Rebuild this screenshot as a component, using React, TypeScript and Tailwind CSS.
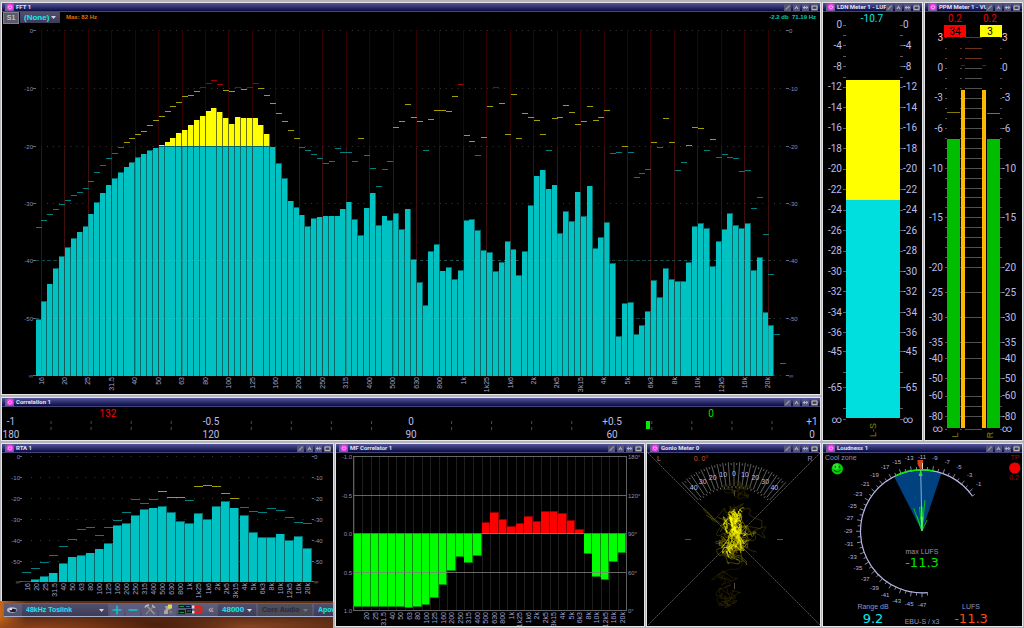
import type { ReactNode } from "react";

const FONT = '"Liberation Sans", Arial, sans-serif';
const METER = 'Roboto, "Liberation Sans", sans-serif';
const READOUT = '"DejaVu Sans", Verdana, sans-serif';

const BANDS = [
  "16", "20", "25", "31.5", "40", "50", "63", "80", "100", "125", "160", "200", "250", "315", "400", "500",
  "630", "800", "1k", "1k25", "1k6", "2k", "2k5", "3k15", "4k", "5k", "6k3", "8k", "10k", "12k5", "16k", "20k",
];

/* ---------- window frame ---------- */

function Glyph({ kind }: { kind: number }) {
  return (
    <svg viewBox="0 0 7 7" className="block h-[7px] w-[7px]" aria-hidden="true">
      {kind === 0 && <path d="M1.2 6 L2 4.6 L5.2 1.3 L6 2 L2.8 5.2Z" fill="#aaa896" />}
      {kind === 1 && <path d="M3.5 1.6 L5.6 5 H4.4 L3.5 3.4 L2.6 5 H1.4Z" fill="#b4b3c0" />}
      {kind === 2 && <path d="M0.6 3.5 L2.8 1.8 V5.2Z M6.4 3.5 L4.2 1.8 V5.2Z M2.5 3 H4.5 V4 H2.5Z" fill="#b4bce0" />}
      {kind === 3 && <path d="M1 2 H6 V5.4 H1Z" fill="#40405e" stroke="#c8c6b0" strokeWidth="1" />}
    </svg>
  );
}

const ACTIONS = ["Edit", "Collapse", "Resize", "Maximise"];

function Panel({ title, children }: { title: string; children: ReactNode }) {
  return (
    <section className="min-w-0 bg-black ring-1 ring-[#e4e4e6]">
      <header className="flex h-[9px] items-center gap-[2px] border-b border-[#45457a] bg-linear-to-b from-[#55559c] to-[#0c0c44] pr-[2px] pl-[3px]">
        <button
          type="button"
          aria-label={`${title} power`}
          className="flex h-2 w-[9px] shrink-0 items-center justify-center bg-[#62628a]"
        >
          <svg viewBox="0 0 8 8" className="block h-2 w-2" aria-hidden="true">
            <circle cx="4" cy="4" r="3.4" fill="#f838f0" />
            <path d="M2.7 3 A1.7 1.7 0 1 0 5.3 3 M4 2 V4" fill="none" stroke="#ffd0ff" strokeWidth="0.7" />
          </svg>
        </button>
        <h2 className="min-w-0 flex-1 font-[Roboto,sans-serif] text-[6px] leading-[8px] font-bold whitespace-nowrap text-[#e4e4f6]">
          {title}
        </h2>
        <div className="flex shrink-0 gap-[2px]">
          {ACTIONS.map((name, i) => (
            <button key={name} type="button" aria-label={name} className="h-[7px] w-[7px] bg-[#55557c]">
              <Glyph kind={i} />
            </button>
          ))}
        </div>
      </header>
      {children}
    </section>
  );
}

function Label(p: {
  x: number;
  y: number;
  size?: number;
  fill?: string;
  anchor?: "start" | "middle" | "end";
  font?: string;
  children: ReactNode;
}) {
  return (
    <text
      x={p.x}
      y={p.y}
      fontSize={p.size ?? 6}
      fill={p.fill ?? "#8e8eba"}
      textAnchor={p.anchor ?? "middle"}
      dominantBaseline="central"
      fontFamily={p.font ?? FONT}
    >
      {p.children}
    </text>
  );
}

function BandLabels({ x0, step, y, size, from = 0 }: { x0: number; step: number; y: number; size: number; from?: number }) {
  return (
    <g fontFamily={FONT} fontSize={size} fill="#a2a2d0" textAnchor="end">
      {BANDS.slice(from).map((b, i) => (
        <text key={b} transform={`translate(${x0 + (i + from) * step} ${y}) rotate(-90)`} dominantBaseline="central">
          {b}
        </text>
      ))}
    </g>
  );
}

/* ---------- FFT ---------- */

const FFT_TOPS = [
  319, 301, 283.7, 268, 256, 247, 238, 231.5, 226, 213.5, 202, 192.7, 184.7, 178, 172, 166.7, 162, 157, 153.7, 150,
  147.7, 145, 142, 138, 133, 130, 125, 120.3, 116, 111, 108, 112, 118, 124, 117, 118, 118, 118, 125, 134, 146.7, 163,
  178, 200.7, 207, 214.5, 226.3, 218, 216.7, 215.5, 215.5, 215.5, 208.7, 201.7, 219, 235, 207.5, 192.7, 225.3, 215.5,
  220.3, 213.3, 229.3, 208.7, 259.3, 282, 305.3, 251, 244, 270.7, 267.3, 279, 270, 220.3, 219.3, 230.3, 250.3, 252.3,
  271, 262, 241, 249.3, 275, 251, 205, 175.7, 169.7, 188.7, 184.7, 233, 211.3, 221.3, 191.7, 216.3, 185.7, 248, 237.3,
  222.3, 263, 336.3, 303, 302, 334, 325, 311, 280, 297, 268, 279, 281, 281, 262, 226.3, 223.3, 228.3, 266, 241.3,
  229.3, 213.3, 225, 228.3, 223.3, 270, 257, 312, 325,
];

const FFT_PEAKS = [
  227.3, 220.3, 214.3, 209, 204.3, 200, 195.3, 192, 188.7, 181.7, 172.3, 165.3, 158.3, 153.3, 147.3, 142.3, 138.3,
  134.3, 131.3, 125.3, 120.3, 116.3, 111.3, 106.3, 102.3, 96.3, 95.3, 91.7, 87.3, 83.3, 80.3, 84.7, 90.3, 91.7, 87.3,
  89.3, 87.3, 83.3, 88.3, 95.3, 103.3, 113.3, 121.3, 130.3, 138.3, 147.3, 150.3, 154.3, 158.3, 163.3, 161.3, 148.3,
  152.3, 152.3, 161.3, 138.3, 155.3, 168, 186.3, 169.3, 161.3, 127.3, 121.3, 104.3, 117.3, 121.3, 150.3, 119.3, 110.3,
  110.3, 111.3, 96.3, 84.7, 135.3, 141.3, 155.3, 137.3, 106.3, 87.3, 103.3, 134.3, 94.3, 138.3, 113.3, 117.3, 120.3,
  134.3, 150.3, 118.3, 117.3, 105.3, 112.3, 124.3, 121.3, 106.3, 120.3, 117.3, 110.3, 153.3, 152.3, 146.3, 152.3,
  177.3, 173.7, 169.3, 142.3, 147.3, 118.3, 142.3, 170.3, 162.3, 145.3, 127.3, 128.3, 150.3, 139.3, 157.3, 154.3,
  157.3, 158.3, 171.3, 170.3, 208, 197.7, 234.3, 274.3, 334.3, 363,
];

const FFT_ROWS: [string, number][] = [
  ["0", 30], ["-10", 88], ["-20", 146], ["-30", 203], ["-40", 260], ["-50", 318], ["∞", 375],
];

function peakColor(y: number, red: number, yellow: number) {
  if (y < red) return "#a40000";
  return y < yellow ? "#a69e00" : "#008080";
}

function FftChart() {
  const x0 = 35.6;
  const step = 5.863;
  return (
    <svg viewBox="2 24 818 370" className="block h-auto w-full" role="img" aria-label="FFT spectrum">
      {FFT_ROWS.map(([name, y]) => (
        <g key={name}>
          <line x1="47" x2="787" y1={y + 0.5} y2={y + 0.5} stroke="#3a3a3a" strokeDasharray={`1 ${step - 1}`} />
          <rect x="33" y={y} width="3" height="1" fill="#66668c" />
          <rect x="786" y={y} width="3" height="1" fill="#66668c" />
          <Label x={33} y={y + 0.5} anchor="end">{name}</Label>
          <Label x={789} y={y + 0.5} anchor="start">{name}</Label>
        </g>
      ))}
      {BANDS.map((b, i) => (
        <rect key={b} x={Math.round(40.8 + i * 23.45)} y="30" width="1" height="345" fill="#330000" />
      ))}
      {FFT_TOPS.map((t, i) => {
        const x = Math.round(x0 + i * step);
        const next = Math.round(x0 + (i + 1) * step);
        const tealTop = Math.max(t, 146);
        return (
          <g key={i} shapeRendering="crispEdges">
            {t < 146 && <rect x={x} y={t} width={next - x} height={146 - t} fill="#6e6e00" />}
            {t < 146 && <rect x={x} y={t} width={5} height={146 - t} fill="#ffff00" />}
            <rect x={x} y={tealTop} width={next - x} height={375.5 - tealTop} fill="#006868" />
            <rect x={x} y={tealTop + 0.6} width={5} height={375 - tealTop} fill="#00c2c2" />
          </g>
        );
      })}
      {[260, 318].map((y) => (
        <line key={y} x1="36" x2="774" y1={y + 0.5} y2={y + 0.5} stroke="#38cccc" strokeOpacity="0.35" strokeDasharray="3 3" />
      ))}
      {BANDS.map((b, i) => (
        <rect key={b} x={Math.round(40.8 + i * 23.45)} y="146" width="1" height="229" fill="#5c3030" fillOpacity="0.3" />
      ))}
      {FFT_PEAKS.map((y, i) => (
        <rect key={i} x={Math.round(x0 + i * step)} y={Math.round(y - 0.3)} width="6" height="1" fill={peakColor(y, 88, 147)} />
      ))}
      <BandLabels x0={41} step={23.45} y={377} size={7} />
    </svg>
  );
}

/* ---------- correlation ---------- */

function CorrelationChart() {
  const scale: [number, string, string][] = [
    [11, "-1", "180"], [211, "-0.5", "120"], [411, "0", "90"], [612, "+0.5", "60"], [812, "+1", "0"],
  ];
  return (
    <svg viewBox="2 407 818 33" className="block h-auto w-full" role="img" aria-label="Correlation">
      {Array.from({ length: 21 }, (_, i) => i)
        .filter((i) => i % 5 !== 0)
        .map((i) => (
          <path key={i} d={`M${11 + i * 40.05} 421 v3 m0 3 v3`} stroke="#4c4c4c" />
        ))}
      {scale.map(([x, top, bottom]) => (
        <g key={x}>
          <Label x={x} y={421} size={10} fill="#bcbcec" font={METER}>{top}</Label>
          <Label x={x} y={434} size={10} fill="#bcbcec" font={METER}>{bottom}</Label>
        </g>
      ))}
      <Label x={108} y={413.5} size={10} fill="#ff0000" font={METER}>132</Label>
      <Label x={711} y={413.5} size={10} fill="#00e000" font={METER}>0</Label>
      <rect x="646" y="421" width="4" height="8" fill="#00f000" />
    </svg>
  );
}

/* ---------- LDN meter ---------- */

const LDN_ROWS: [string, number][] = [
  ["0", 24.5], ["-4", 45.3], ["-8", 66], ["-12", 86.7], ["-14", 107.3], ["-16", 127.7], ["-18", 148], ["-20", 168.5],
  ["-22", 189], ["-24", 209.5], ["-26", 230.3], ["-28", 250.7], ["-30", 271.3], ["-32", 291.3], ["-34", 312],
  ["-36", 332.3], ["-45", 351], ["-65", 387.3], ["∞", 419],
];

function LdnChart() {
  return (
    <svg viewBox="823 12 99 428" className="block h-auto w-full" role="img" aria-label="LDN meter">
      <Label x={872} y={18} size={10} fill="#00e8e8" font={METER}>-10.7</Label>
      {[...LDN_ROWS.map((r) => r[1]), 34.8, 56, 76.6, 371.7, 408.3].map((y) => (
        <path key={y} d={`M843 ${Math.round(y) + 0.5} h3 M900 ${Math.round(y) + 0.5} h3`} stroke="#5c5c5c" />
      ))}
      <rect x="846" y="80" width="54" height="120" fill="#ffff00" />
      <rect x="846" y="200" width="54" height="218" fill="#00dede" />
      {LDN_ROWS.map(([name, y]) => (
        <g key={name}>
          <Label x={842} y={y} size={10} fill="#bcbcec" anchor="end" font={METER}>{name}</Label>
          <Label x={903} y={y} size={10} fill="#bcbcec" anchor="start" font={METER}>{name}</Label>
        </g>
      ))}
      <text
        transform="translate(873 430) rotate(-90)"
        fontSize="9"
        fontFamily={FONT}
        fill="#8a8600"
        textAnchor="middle"
        dominantBaseline="central"
      >
        L-S
      </text>
    </svg>
  );
}

/* ---------- PPM meter ---------- */

const PPM_ROWS: [string, number][] = [
  ["3", 37.3], ["0", 67.7], ["-3", 97.7], ["-6", 128], ["-10", 168], ["-15", 217], ["-20", 267.3], ["-25", 292.3],
  ["-30", 317.3], ["-35", 342.3], ["-40", 358.3], ["-50", 378], ["-60", 395.7], ["-80", 416], ["∞", 428.5],
];
const PPM_MINOR = [
  48, 58, 78, 88, 108, 118, 138, 148, 158, 178, 188, 197, 207, 227, 237, 247, 257, 406,
];

function PpmChart() {
  return (
    <svg viewBox="925 12 97 428" className="block h-auto w-full" role="img" aria-label="PPM meter">
      <Label x={955} y={18.5} size={10} fill="#e80000" font={METER}>0.2</Label>
      <Label x={990} y={18.5} size={10} fill="#e80000" font={METER}>0.2</Label>
      {[...PPM_ROWS.map((r) => Math.round(r[1])), ...PPM_MINOR].map((y) => {
        const color = y < 60 ? "#6e3218" : "#505050";
        return (
          <g key={y} fill={color}>
            <rect x="965" y={y} width="17" height="1" />
            <rect x="945" y={y} width="2" height="1" />
            <rect x="960" y={y} width="2" height="1" />
            <rect x="1000" y={y} width="2" height="1" />
          </g>
        );
      })}
      <rect x="944" y="25" width="22" height="12" fill="#ff0000" />
      <rect x="980" y="25" width="22" height="12" fill="#ffff00" />
      <Label x={955} y={31} size={10} fill="#000000" font={METER}>34</Label>
      <Label x={990} y={31} size={10} fill="#000000" font={METER}>3</Label>
      <rect x="947" y="139" width="13" height="289" fill="#00bd00" />
      <rect x="987" y="139" width="13" height="289" fill="#00bd00" />
      <rect x="961" y="90" width="4" height="338" fill="#ffb800" />
      <rect x="982" y="90" width="4" height="338" fill="#ffb800" />
      <rect x="947" y="112" width="13" height="1" fill="#827a00" />
      <rect x="987" y="113" width="13" height="1" fill="#827a00" />
      <rect x="961" y="65" width="4" height="1" fill="#a00000" />
      <rect x="982" y="65" width="4" height="1" fill="#a00000" />
      {PPM_ROWS.map(([name, y], i) => (
        <g key={name}>
          <Label x={943} y={y} size={10} fill={i === 0 ? "#ffc4c4" : "#bcbcec"} anchor="end" font={METER}>{name}</Label>
          <Label x={1002} y={y} size={10} fill={i === 0 ? "#ffc4c4" : "#bcbcec"} anchor="start" font={METER}>{name}</Label>
        </g>
      ))}
      <g fontSize="9" fontFamily={FONT} fill="#8a8600" textAnchor="middle" dominantBaseline="central">
        <text transform="translate(955 435) rotate(-90)">L</text>
        <text transform="translate(990 435) rotate(-90)">R</text>
      </g>
    </svg>
  );
}

/* ---------- RTA ---------- */

const RTA_TOPS = [
  581, 579, 576, 572.7, 563.3, 556.7, 555, 552.7, 548.7, 543, 525.3, 523.3, 515, 509, 507.7, 506, 512, 521, 523.3,
  513.3, 519, 506.3, 501.3, 507.7, 515, 532.3, 537, 537, 533.7, 540, 536.3, 548,
];
const RTA_PEAKS = [
  572.7, 568.3, 562.3, 555.3, 546.3, 539.3, 529.3, 527.3, 535.3, 527, 520.3, 512.3, 499.3, 503.3, 499.3, 491.7, 497.3,
  497.3, 500.7, 486.3, 485.3, 486, 493.3, 498.3, 507.7, 511.3, 512.3, 508.7, 510.7, 517, 522.3, 523.3,
];
const RTA_ROWS: [string, number][] = [
  ["0", 456], ["-10", 477], ["-20", 498], ["-30", 519], ["-40", 540], ["-50", 561], ["∞", 581],
];

function RtaChart() {
  return (
    <svg viewBox="2 453 331 148" className="block h-auto w-full" role="img" aria-label="Real time analyser">
      {RTA_ROWS.map(([name, y]) => (
        <g key={name}>
          <line x1="31" x2="312" y1={y + 0.5} y2={y + 0.5} stroke="#3a3a3a" strokeDasharray="1 8.05" />
          <rect x="20" y={y} width="2" height="1" fill="#66668c" />
          <rect x="312" y={y} width="2" height="1" fill="#66668c" />
          <Label x={20} y={y + 0.5} anchor="end">{name}</Label>
          <Label x={314} y={y + 0.5} anchor="start">{name}</Label>
        </g>
      ))}
      {RTA_TOPS.map((t, i) => {
        const x = Math.round(22.3 + i * 9.05);
        return (
          <g key={i} shapeRendering="crispEdges">
            <rect x={x} y={t} width={9} height={581.5 - t} fill="#006868" />
            <rect x={x} y={t + 0.6} width={8} height={581 - t} fill="#00c2c2" />
          </g>
        );
      })}
      {RTA_PEAKS.map((y, i) => (
        <rect key={i} x={Math.round(22.3 + i * 9.05)} y={Math.round(y - 0.3)} width="9" height="1" fill={peakColor(y, 470, 498.5)} />
      ))}
      <BandLabels x0={27} step={9.05} y={583} size={7} />
    </svg>
  );
}

/* ---------- MF correlator ---------- */

const MF = [
  607, 607, 607, 607, 607, 607, 607.7, 607, 604.3, 597.7, 584.3, 571, 556.7, 562.3, 555.3, 522.3, 512, 519, 526, 523.3,
  516.3, 521.3, 511.3, 510.7, 513.3, 520, 529, 553.3, 576.7, 579.3, 561.7, 553,
];

function MfChart() {
  const rows: [string, string, number][] = [
    ["-1.0", "180°", 456], ["-0.5", "120°", 495], ["0.0", "90°", 533], ["0.5", "60°", 572], ["1.0", "0°", 610],
  ];
  return (
    <svg viewBox="336 453 308 173" className="block h-auto w-full" role="img" aria-label="MF correlator">
      {MF.map((_, i) => (
        <rect key={i} x={Math.round(353.7 + i * 8.52)} y="456" width="1" height="154" fill="#1e1e1e" />
      ))}
      {MF.map((v, i) => {
        const x = Math.round(353.7 + i * 8.52);
        const next = Math.round(353.7 + (i + 1) * 8.52);
        const up = v < 533;
        const y = up ? v : 534;
        const h = Math.abs(v - 533.7);
        return (
          <g key={i} shapeRendering="crispEdges">
            <rect x={x} y={y} width={next - x} height={h} fill={up ? "#8c0000" : "#008c00"} />
            <rect x={x} y={up ? y + 1 : y} width={next - x - 1} height={Math.max(h - 1, 1)} fill={up ? "#ff0000" : "#00ff00"} />
          </g>
        );
      })}
      {rows.map(([l, r, y]) => (
        <g key={l}>
          <rect x="353" y={y} width="274" height="1" fill="#808080" fillOpacity="0.8" />
          <Label x={352} y={y + 0.5} anchor="end">{l}</Label>
          <Label x={628} y={y + 0.5} anchor="start">{r}</Label>
        </g>
      ))}
      <path d="M353.5 456 V611 M626.5 456 V611" stroke="#606060" />
      <BandLabels x0={358} step={8.52} y={612} size={7} from={1} />
    </svg>
  );
}

/* ---------- goniometer ---------- */

function makeRandom(seed: number) {
  let s = seed;
  return () => {
    s = (s * 1664525 + 1013904223) % 4294967296;
    return s / 4294967296;
  };
}

function trace(seed: number, n: number, cx: number, cy: number, rx: number, ry: number, jump: number) {
  const rnd = makeRandom(seed);
  let x = 0;
  let y = 0;
  let d = `M${cx} ${cy}`;
  for (let i = 0; i < n; i++) {
    const px = x + (rnd() - 0.5) * jump;
    const py = y + (rnd() - 0.5) * jump;
    x = Math.max(-1, Math.min(1, x * 0.8 + (rnd() - 0.5) * jump));
    y = Math.max(-1, Math.min(1, y * 0.85 + (rnd() - 0.5) * jump));
    d += ` Q${(cx + px * rx).toFixed(1)} ${(cy + py * ry).toFixed(1)} ${(cx + x * rx).toFixed(1)} ${(cy + y * ry).toFixed(1)}`;
  }
  return d;
}

const TRACES: [string, string, number][] = [
  [trace(11, 30, 735, 495, 13, 12, 1.3), "#3a3200", 0.5],
  [trace(23, 30, 733, 595, 14, 10, 1.3), "#3a3200", 0.5],
  [trace(31, 12, 728, 574, 22, 12, 1.2), "#332c00", 0.5],
  [trace(43, 40, 733, 530, 29, 22, 1.1), "#5a5200", 0.5],
  [trace(57, 55, 732, 552, 16, 12, 1.3), "#8a8000", 0.5],
  [trace(61, 45, 737, 525, 17, 20, 1.1), "#a09600", 0.5],
  [trace(73, 90, 734, 532, 11, 21, 1.05), "#f4f000", 0.6],
  [trace(87, 34, 736, 522, 11, 14, 1.1), "#ffff00", 0.6],
];

const polar = (cx: number, cy: number, r: number, deg: number) => {
  const a = (deg * Math.PI) / 180;
  return `${(cx + r * Math.sin(a)).toFixed(2)} ${(cy - r * Math.cos(a)).toFixed(2)}`;
};

function GonioChart() {
  const cx = 734;
  const cy = 539;
  const ticks = Array.from({ length: 21 }, (_, i) => (i - 10) * 4.25);
  const dots = Array.from({ length: 20 }, (_, i) => (i - 9.5) * 4.25);
  return (
    <svg viewBox="647 453 173 173" className="block h-auto w-full" role="img" aria-label="Goniometer">
      <path d="M648 453 L820 625 M820 453 L648 625" stroke="#646464" strokeWidth="0.8" strokeDasharray="2 0.6" />
      <path d="M685 539.5 h6 M777 539.5 h6 M734.5 490 v6 M734.5 583 v6" stroke="#505050" />
      {ticks.map((a) => (
        <path key={a} d={`M${polar(cx, cy, 53, a)} L${polar(cx, cy, 77, a)}`} stroke="#868686" strokeWidth="0.7" />
      ))}
      {dots.map((a) => (
        <path
          key={a}
          d={`M${polar(cx, cy, 51, a)} L${polar(cx, cy, 53, a)} M${polar(cx, cy, 74, a)} L${polar(cx, cy, 76, a)}`}
          stroke="#868686"
          strokeWidth="0.8"
        />
      ))}
      {[-40, -30, -20, -10, 0, 10, 20, 30, 40].map((v) => {
        const [x, y] = polar(cx, cy, 65.5, v * 0.95).split(" ").map(Number);
        return <Label key={v} x={x} y={y} size={7} fill="#bcbcec">{Math.abs(v)}</Label>;
      })}
      {TRACES.map(([d, color, w], i) => (
        <path key={i} d={d} fill="none" stroke={color} strokeWidth={w} />
      ))}
      <Label x={659} y={458} size={7}>L</Label>
      <Label x={810} y={458} size={7}>R</Label>
      <Label x={701} y={458} size={7} fill="#d05c18">0. 0°</Label>
    </svg>
  );
}

/* ---------- loudness ---------- */

function LoudnessChart() {
  const cx = 922;
  const cy = 531.3;
  const units = Array.from({ length: 49 }, (_, i) => -i);
  return (
    <svg viewBox="823 453 199 173" className="block h-auto w-full" role="img" aria-label="Loudness">
      <path d={`M${cx} ${cy} L${polar(cx, cy, 61, -27)} A61 61 0 0 1 ${polar(cx, cy, 61, 18.5)}Z`} fill="#00427f" />
      <path
        d={`M${polar(cx, cy, 61.5, -185)} A61.5 61.5 0 1 1 ${polar(cx, cy, 61.5, 55)}`}
        fill="none"
        stroke="#b8b8e4"
        strokeWidth="1.2"
      />
      {units.map((v) => (
        <path
          key={v}
          d={`M${polar(cx, cy, 61, (v + 11) * 5)} L${polar(cx, cy, v % 2 ? 66 : 64.5, (v + 11) * 5)}`}
          stroke="#a4a4d0"
          strokeWidth="0.8"
        />
      ))}
      {units
        .filter((v) => v % 2 !== 0)
        .map((v) => {
          const [x, y] = polar(cx, cy, 74, (v + 11) * 5).split(" ").map(Number);
          return <Label key={v} x={x} y={y} fill="#b4b4e0">{v}</Label>;
        })}
      <path d={`M${polar(cx, cy, 61.5, -26)} A61.5 61.5 0 0 1 ${polar(cx, cy, 61.5, 11)}`} fill="none" stroke="#00f000" strokeWidth="1.5" />
      <path d="M917.5 460 H923 V464 L920.5 470 L917.5 464Z" fill="#d04418" />
      <path d="M922.5 463 V469" stroke="#ffffff" strokeWidth="0.8" />
      <path
        d="M922 531 L913.7 508.3 M922 531 L919.5 507 M922 531 L921 506 M922 531 L922.8 507 M922 531 L925 500 M922 531 L927 520 M922 531 L917 516"
        stroke="#00d020"
        strokeWidth="0.9"
      />
      <path d="M922 531.5 L920.5 517 H923.5Z" fill="#30f030" />
      <path d="M922 531 L920.7 470" stroke="#b8c8d8" strokeWidth="0.8" />
      <path d="M920.7 470 L918.5 476 H922.7Z" fill="#30e030" />

      <Label x={825} y={457.5} anchor="start" size={7}>Cool zone</Label>
      <circle cx="837.3" cy="468.7" r="5.7" fill="#00d000" />
      <circle cx="836" cy="466.5" r="3" fill="#70f070" fillOpacity="0.5" />
      <path d="M835.2 465.8 v2 M839.2 465.8 v2 M833.8 470 q3.4 3.4 6.8 0" fill="none" stroke="#003000" strokeWidth="0.9" />
      <Label x={1015} y={457.5} size={7} fill="#b00000">TP</Label>
      <circle cx="1014.7" cy="468" r="5.6" fill="#f00000" />
      <Label x={1014} y={477.5} size={7} fill="#b00000">0.2</Label>

      <Label x={922} y={551} size={7} fill="#9494c0">max LUFS</Label>
      <Label x={922} y={562.5} size={13} fill="#00e000" font={READOUT}>-11.3</Label>
      <Label x={873} y={606.5} size={7} fill="#9494c0">Range dB</Label>
      <Label x={873} y={618} size={13} fill="#00f0f0" font={READOUT}>9.2</Label>
      <Label x={922} y={621.5} size={7} fill="#9494c0">EBU-S / x3</Label>
      <Label x={971} y={606.5} size={7} fill="#9494c0">LUFS</Label>
      <Label x={971} y={618} size={13} fill="#ff4a10" font={READOUT}>-11.3</Label>
    </svg>
  );
}

/* ---------- controls ---------- */

function Caret({ dim = false }: { dim?: boolean }) {
  return (
    <svg viewBox="0 0 5 3" className="pointer-events-none absolute right-1 bottom-[4px] h-[3px] w-[5px]" aria-hidden="true">
      <path d="M0 0 H5 L2.5 3Z" fill={dim ? "#777786" : "#d4d4e0"} />
    </svg>
  );
}

function Choice({ label, value, className, disabled = false }: { label: string; value: string; className: string; disabled?: boolean }) {
  return (
    <div className={`relative shrink-0 font-bold ${className}`}>
      <select
        aria-label={label}
        disabled={disabled}
        defaultValue={value}
        className="block h-full w-full appearance-none bg-linear-to-b from-[#50506c] to-[#3c3c58] pl-1 leading-[10px] text-[#18e8f0] disabled:from-[#50505c] disabled:to-[#484854] disabled:text-[#2a2a3a] disabled:opacity-100"
      >
        <option>{value}</option>
      </select>
      <Caret dim={disabled} />
    </div>
  );
}

function Tool({ label, className, children }: { label: string; className: string; children: ReactNode }) {
  return (
    <button
      type="button"
      aria-label={label}
      className={`flex h-3 shrink-0 items-center justify-center ${className}`}
    >
      {children}
    </button>
  );
}

function Toolbar() {
  return (
    <div className="ml-1 flex h-[14px] items-center gap-[2px] overflow-hidden border-b border-[#a8b0cc] bg-linear-to-b from-[#62627e] to-[#4e4e70]">
      <Tool label="Show" className="w-4">
        <svg viewBox="0 0 12 10" className="h-[10px] w-3" aria-hidden="true">
          <ellipse cx="6" cy="5" rx="5" ry="2.8" fill="#b8bccc" />
          <ellipse cx="7" cy="5.4" rx="3.4" ry="1.7" fill="#1c1c30" />
          <circle cx="5" cy="4.2" r="1" fill="#ffffff" />
        </svg>
      </Tool>
      <Choice label="Preset" value="48kHz Toslink" className="h-3 w-[86px] text-[7px]" />
      <Tool label="Add" className="w-[14px] bg-[#5c5c7e]">
        <svg viewBox="0 0 10 10" className="h-[10px] w-[10px]" aria-hidden="true">
          <path d="M5 0.5 V9.5 M0.5 5 H9.5" stroke="#10c4cc" strokeWidth="1.6" />
        </svg>
      </Tool>
      <Tool label="Remove" className="w-[14px] bg-[#5c5c7e]">
        <svg viewBox="0 0 10 10" className="h-[10px] w-[10px]" aria-hidden="true">
          <path d="M0.5 5 H9.5" stroke="#10c4cc" strokeWidth="1.6" />
        </svg>
      </Tool>
      <Tool label="Settings" className="w-[15px] bg-[#5c5c7e]">
        <svg viewBox="0 0 12 11" className="h-[11px] w-3" aria-hidden="true">
          <path d="M1 3.6 Q2 1 5 1" fill="none" stroke="#c0c0b8" strokeWidth="1.4" />
          <path d="M3 2 L10.5 10" fill="none" stroke="#a49c88" strokeWidth="1.3" />
          <path d="M9.4 2.6 L2 10" fill="none" stroke="#8c8478" strokeWidth="1.4" />
          <path d="M8.4 0.8 L9.2 2.8 L11.2 3.4" fill="none" stroke="#c8c8c0" strokeWidth="1.1" />
        </svg>
      </Tool>
      <Tool label="Microphone" className="w-[17px] bg-[#5c5c7e]">
        <svg viewBox="0 0 12 11" className="h-[11px] w-3" aria-hidden="true">
          <path d="M3 2 H9 V5 L6 6 V10 H2 V7 L4 5Z" fill="#a8a8a0" />
          <path d="M6 0.5 H10 V4.5 H6Z" fill="#e0d840" />
          <path d="M7 6.5 H10.5 V9.5 H7Z" fill="#78787c" />
        </svg>
      </Tool>
      <Tool label="Snap meters" className="w-[26px]">
        <svg viewBox="0 0 26 11" className="h-[11px] w-[26px]" aria-hidden="true">
          <path d="M0.5 1 H13 V4 H0.5Z M0.5 6 H7 V10 H0.5Z M8 5 H14 V9 H8Z" fill="#101c18" />
          <path d="M1.5 2.5 H6 M1.5 8.5 H6" stroke="#18a040" strokeWidth="1.2" />
          <path d="M8 2.5 H12 M9 7 H13" stroke="#2a78a8" strokeWidth="1" />
          <path d="M16 3 H20.5 A2.6 2.6 0 0 1 20.5 8.2 H16" fill="none" stroke="#e8200f" strokeWidth="2.8" />
          <path d="M14 3 H16.4 M14 8.2 H16.4" stroke="#d8d8e0" strokeWidth="2.8" />
        </svg>
      </Tool>
      <Tool label="Less" className="w-[10px] text-[10px] leading-[10px] text-[#c4c4d4]">«</Tool>
      <Choice label="Sample rate" value="48000" className="h-3 w-[38px] text-[8px]" />
      <Choice label="Driver" value="Core Audio" className="h-3 w-[54px] text-[7px]" disabled />
      <Choice label="Device" value="Apow" className="h-3 w-[60px] text-[7px]" />
    </div>
  );
}

export default function App() {
  return (
    <main className="flex min-h-screen flex-col gap-1 bg-[#b4b4ba] px-[2px] pt-[3px] font-['Liberation_Sans',Arial,sans-serif]">
      <div className="grid grid-cols-[minmax(0,818fr)_minmax(0,99fr)_minmax(0,97fr)] items-start gap-[3px]">
        <div className="flex min-w-0 flex-col gap-1">
          <Panel title="FFT 1">
            <div className="flex h-3 items-start gap-px px-px">
              <button
                type="button"
                className="h-3 w-4 shrink-0 border border-[#80808e] bg-[#5a5a6c] text-[7px] leading-[10px] font-bold text-[#c4c4b4]"
              >
                S1
              </button>
              <Choice label="Source" value="(None)" className="h-[11px] w-10 text-[8px]" />
              <p className="pl-[5px] text-[6px] leading-[11px] font-bold text-[#e07000]">Max: 82 Hz</p>
              <p className="ml-auto pr-[3px] text-[6px] leading-[11px] font-bold text-[#00c8c0]">
                -2.2 db&nbsp; 71.19 Hz
              </p>
            </div>
            <FftChart />
          </Panel>
          <Panel title="Correlation 1">
            <CorrelationChart />
          </Panel>
        </div>
        <Panel title="LDN Meter 1 - LUF">
          <LdnChart />
        </Panel>
        <Panel title="PPM Meter 1 - VU/">
          <PpmChart />
        </Panel>
      </div>

      <div className="grid flex-1 grid-cols-[minmax(0,331fr)_minmax(0,308fr)_minmax(0,173fr)_minmax(0,199fr)] items-start gap-[3px]">
        <div className="flex min-w-0 flex-col self-stretch">
          <Panel title="RTA 1">
            <RtaChart />
          </Panel>
          <div className="-ml-[2px] flex-1 bg-[#6b3418] bg-[radial-gradient(ellipse_at_12%_100%,#8c4018_0%,transparent_30%),radial-gradient(ellipse_at_45%_90%,#4a1e0c_0%,transparent_35%),radial-gradient(ellipse_at_75%_95%,#844422_0%,transparent_28%),linear-gradient(90deg,#c86818_0%,#5c2c14_8%)] pt-[2px]">
            <Toolbar />
          </div>
        </div>
        <Panel title="MF Correlator 1">
          <MfChart />
        </Panel>
        <Panel title="Gonio Meter 0">
          <GonioChart />
        </Panel>
        <Panel title="Loudness 1">
          <LoudnessChart />
        </Panel>
      </div>
    </main>
  );
}
